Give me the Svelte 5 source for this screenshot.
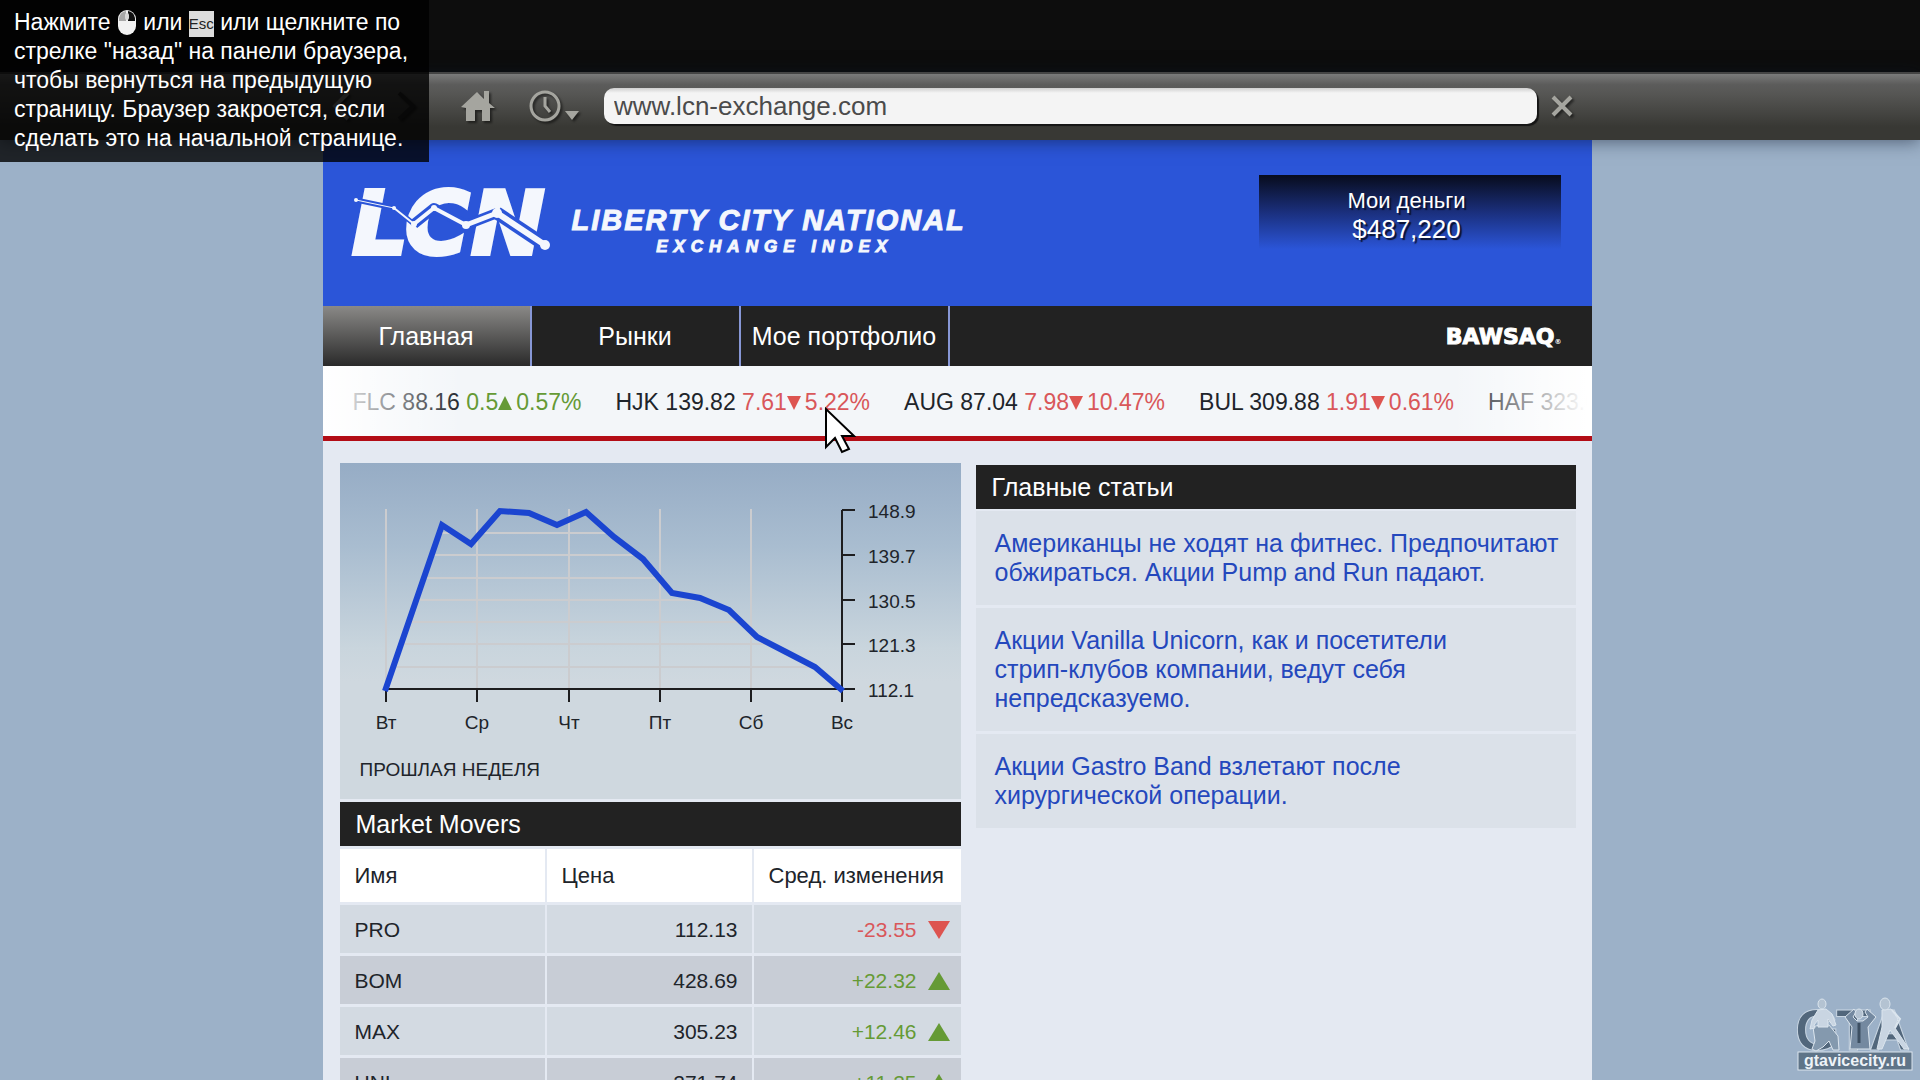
<script>
  const TABS = ["Главная", "Рынки", "Мое портфолио"];

  const TICKER = [
    { name: "FLC", price: "88.16", change: "0.5", percent: "0.57%", up: true },
    { name: "HJK", price: "139.82", change: "7.61", percent: "5.22%", up: false },
    { name: "AUG", price: "87.04", change: "7.98", percent: "10.47%", up: false },
    { name: "BUL", price: "309.88", change: "1.91", percent: "0.61%", up: false },
    { name: "HAF", price: "323.07", change: "", percent: "", up: true },
  ];

  const MOVERS = [
    { name: "PRO", price: "112.13", change: "-23.55", up: false },
    { name: "BOM", price: "428.69", change: "+22.32", up: true },
    { name: "MAX", price: "305.23", change: "+12.46", up: true },
    { name: "UNI", price: "271.74", change: "+11.25", up: true },
  ];

  const ARTICLES = [
    "Американцы не ходят на фитнес. Предпочитают\nобжираться. Акции Pump and Run падают.",
    "Акции Vanilla Unicorn, как и посетители\nстрип-клубов компании, ведут себя\nнепредсказуемо.",
    "Акции Gastro Band взлетают после\nхирургической операции.",
  ];

  // Chart geometry, in viewBox units
  const DAYS = [
    { label: "Вт", x: 46 },
    { label: "Ср", x: 137 },
    { label: "Чт", x: 229 },
    { label: "Пт", x: 320 },
    { label: "Сб", x: 411 },
    { label: "Вс", x: 502 },
  ];
  const LEVELS = [
    { label: "148.9", y: 47 },
    { label: "139.7", y: 92 },
    { label: "130.5", y: 137 },
    { label: "121.3", y: 181 },
    { label: "112.1", y: 226 },
  ];
  const GRID_ROWS = [70, 92, 115, 137, 159, 181, 204];
  const LINE =
    "45,228 102,62 131,81 160,48 189,50 217,62 246,49 274,74 303,96 332,130 360,135 389,147 417,174 446,189 475,204 503,228";

  let activeTab = $state(TABS[0]);
  let address = $state("www.lcn-exchange.com");
</script>

{#snippet arrow(up, size)}
  <svg
    class="arrow"
    width={size}
    height={size}
    viewBox="0 0 20 20"
    preserveAspectRatio="none"
    aria-hidden="true"
  >
    <path d={up ? "M10 0L20 20H0Z" : "M0 0H20L10 20Z"} />
  </svg>
{/snippet}

<div class="screen">
  <div class="letterbox"></div>

  <!-- Browser bar -->
  <header class="toolbar">
    <div class="toolbar-inner">
      <button class="tool back" aria-label="Назад">
        <svg width="24" height="32" viewBox="0 0 24 32">
          <path d="M19 3L6 16l13 13" fill="none" stroke="#9a9a94" stroke-width="4" />
        </svg>
      </button>
      <button class="tool forward" aria-label="Вперед">
        <svg width="24" height="32" viewBox="0 0 24 32">
          <path d="M4 3l14 13L4 29" fill="none" stroke="#2c2c29" stroke-width="4" />
        </svg>
      </button>
      <button class="tool home" aria-label="Домой">
        <svg width="36" height="32" viewBox="0 0 36 32">
          <path d="M1 17L17 2l7 7V1h5v12l6 5h-5v13h-8V20h-7v11H6V18Z" fill="#a5a59f" />
        </svg>
      </button>
      <button class="tool history" aria-label="Журнал">
        <svg width="52" height="34" viewBox="0 0 52 34">
          <circle cx="17" cy="17" r="14" fill="none" stroke="#a5a59f" stroke-width="3" />
          <path d="M17 8v9l5 6" fill="none" stroke="#a5a59f" stroke-width="3" />
          <path d="M37 22h14l-7 9Z" fill="#a5a59f" />
        </svg>
      </button>
      <input class="address" type="text" aria-label="Адрес" bind:value={address} />
      <button class="tool close" aria-label="Закрыть">
        <svg width="22" height="22" viewBox="0 0 22 22">
          <path d="M2 2l18 18M20 2L2 20" stroke="#a5a59f" stroke-width="4" />
        </svg>
      </button>
    </div>
  </header>

  <main class="page">
    <div class="banner">
      <div class="brand">
        <svg class="logo" width="200" height="80" viewBox="0 0 200 80" role="img" aria-label="LCN">
          <g class="logo-letters">
            <text x="-1" y="70">L</text>
            <text x="52" y="70">C</text>
            <text x="118" y="70">N</text>
          </g>
          <g fill="none" stroke="#2b55d8" stroke-linejoin="round">
            <path d="M3 16L41 24L61 40" stroke-width="5" />
            <path d="M61 40L81 24L113 41L144 29" stroke-width="10" />
            <path d="M144 29L192 61" stroke-width="13" />
          </g>
          <g fill="none" stroke="#f4f7fd" stroke-linejoin="round" stroke-linecap="round">
            <path d="M3 16L41 24" stroke-width="1" />
            <path d="M41 24L61 40" stroke-width="2" />
            <path d="M61 40L81 24L113 41" stroke-width="4" />
            <path d="M113 41L144 29" stroke-width="5" />
            <path d="M144 29L192 61" stroke-width="6" />
          </g>
          <g fill="#f4f7fd">
            <circle cx="3" cy="16" r="2" />
            <circle cx="41" cy="24" r="2" />
            <circle cx="61" cy="40" r="3" />
            <circle cx="81" cy="24" r="3" />
            <circle cx="113" cy="41" r="4" />
            <circle cx="144" cy="29" r="5" />
            <circle cx="192" cy="61" r="5" />
          </g>
        </svg>
        <div class="brand-text">
          <div class="brand-name">LIBERTY CITY NATIONAL</div>
          <div class="brand-sub">EXCHANGE INDEX</div>
        </div>
      </div>
      <div class="money">
        <div class="money-label">Мои деньги</div>
        <div class="money-value">$487,220</div>
      </div>
    </div>

    <nav class="tabs">
      {#each TABS as tab}
        <button class="tab" class:active={tab === activeTab} onclick={() => (activeTab = tab)}>
          {tab}
        </button>
      {/each}
      <a class="bawsaq" href="#bawsaq">BAWSAQ<span class="reg">®</span></a>
    </nav>

    <div class="ticker">
      {#each TICKER as item}
        <div class="quote">
          <span>{item.name} {item.price}</span>
          {#if item.change}
            <span class="change" class:up={item.up}>
              {item.change}{@render arrow(item.up, 14)}{item.percent}
            </span>
          {/if}
        </div>
      {/each}
    </div>

    <div class="content">
      <div class="market">
        <section class="chart">
          <svg class="plot" viewBox="0 0 621 280">
            <clipPath id="under-line">
              <polygon points={LINE} />
            </clipPath>
            <g clip-path="url(#under-line)">
              {#each GRID_ROWS as y}
                <line class="grid" x1="46" x2="502" y1={y} y2={y} />
              {/each}
            </g>
            {#each DAYS.slice(0, 5) as day}
              <line class="grid" x1={day.x} x2={day.x} y1="46" y2="226" />
            {/each}
            <path class="axis" d="M46 226H502V47" />
            {#each DAYS as day}
              <line class="axis" x1={day.x} x2={day.x} y1="226" y2="239" />
              <text x={day.x} y="266" text-anchor="middle">{day.label}</text>
            {/each}
            {#each LEVELS as level}
              <line class="axis" x1="502" x2="515" y1={level.y} y2={level.y} />
              <text x="528" y={level.y + 8}>{level.label}</text>
            {/each}
            <polyline class="trend" points={LINE} />
          </svg>
          <div class="period">ПРОШЛАЯ НЕДЕЛЯ</div>
        </section>

        <section>
          <h2>Market Movers</h2>
          <table>
            <thead>
              <tr>
                <th>Имя</th>
                <th>Цена</th>
                <th>Сред. изменения</th>
              </tr>
            </thead>
            <tbody>
              {#each MOVERS as row}
                <tr>
                  <td>{row.name}</td>
                  <td class="price">{row.price}</td>
                  <td>
                    <div class="change delta" class:up={row.up}>
                      {row.change}
                      {@render arrow(row.up, 22)}
                    </div>
                  </td>
                </tr>
              {/each}
            </tbody>
          </table>
        </section>
      </div>

      <section class="news">
        <h2>Главные статьи</h2>
        {#each ARTICLES as article}
          <article><a href="#article">{article}</a></article>
        {/each}
      </section>
    </div>
  </main>

  <!-- Help box over the browser -->
  <aside class="hint">
    Нажмите
    <svg class="mouse" width="20" height="27" viewBox="0 0 20 27" aria-hidden="true">
      <rect x="1" y="1" width="18" height="25" rx="9" fill="#f2f2f2" />
      <path d="M9 2v10H2V9q1-6 7-7Z" fill="#a8a8a8" />
      <path d="M11 2v10h7V9q-1-6-7-7Z" fill="#111" />
      <rect x="8" y="4" width="4" height="7" rx="2" fill="#d8d8d8" />
    </svg>
    или <kbd>Esc</kbd> или щелкните по<br />
    стрелке "назад" на панели браузера,<br />
    чтобы вернуться на предыдущую<br />
    страницу. Браузер закроется, если<br />
    сделать это на начальной странице.
  </aside>

  <svg class="cursor" width="32" height="48" viewBox="0 0 32 48" aria-hidden="true">
    <path
      d="M2 3V41L11 32L18 46L25 43L18 30H30Z"
      fill="#fff"
      stroke="#000"
      stroke-width="2"
    />
  </svg>

  <svg class="watermark" width="116" height="78" viewBox="0 0 116 78" role="img" aria-label="gtavicecity.ru">
    <g class="watermark-big">
      <text x="-2" y="54">G</text>
      <text x="39" y="54">T</text>
      <text x="72" y="54">A</text>
    </g>
    <!-- Seated figure -->
    <g stroke="#dbe5ee" stroke-width="1">
      <path d="M16 31l6-2h10l9 11 1 14h-6l-4-9-6 6-7 4-4-2 3-8Z" fill="#8499ae" />
      <path d="M21 14l8-1 6 5 4 11-3 1-5-7v8H21v-7l-4 5 1 3-5 1 2-9Z" fill="#c9d5e2" />
      <ellipse cx="25" cy="8" rx="4" ry="5" fill="#b4c3d2" />
    </g>
    <!-- Figure with raised arms -->
    <g stroke="#dbe5ee" stroke-width="1">
      <path d="M57 13L48 21l7 10-2 22h20l-2-22 8-10-9-8-2 3 3 5-5 4h-6l-4-4 3-5Z" fill="#7489a0" />
      <ellipse cx="62" cy="18" rx="4" ry="5" fill="#b4c3d2" />
      <path d="M62 27v20" stroke="#3d4f62" stroke-width="3" />
    </g>
    <!-- Leaning figure -->
    <g stroke="#dbe5ee" stroke-width="1">
      <path d="M85 14l9-1 7 10-3 9 14 21h-5L93 34l-8 19h-5l5-22Z" fill="#c9d5e2" />
      <path d="M95 14l8 9-5 9" fill="none" stroke-width="2" />
      <ellipse cx="88" cy="8" rx="5" ry="6" fill="#b4c3d2" />
    </g>
    <rect x="1" y="56" width="114" height="18" fill="#5f7488" stroke="#dbe5ee" />
    <text class="watermark-url" x="58" y="70" text-anchor="middle">gtavicecity.ru</text>
  </svg>
</div>

<style>
  :global(body) {
    margin: 0;
    background: #9cb1c8;
  }

  .screen {
    position: relative;
    height: 100vh;
    overflow: hidden;
    background: #9cb1c8;
    color: #20242a;
    font-family: "Liberation Sans", Arial, sans-serif;
  }

  button {
    font: inherit;
    border: 0;
    cursor: pointer;
  }

  .letterbox {
    height: 72px;
    background: #0d0d0d;
  }

  .toolbar {
    position: relative;
    z-index: 1;
    height: 68px;
    box-sizing: border-box;
    padding-right: 5px;
    border-top: 2px solid #444;
    background: linear-gradient(#7a7a7a, #5c5c5b 16%, #565654 30%, #383834 80%, #383834);
    box-shadow: 0 2px 16px rgba(10, 20, 40, 0.5);
  }

  .toolbar-inner {
    display: flex;
    align-items: center;
    max-width: 1269px;
    height: 64px;
    margin: 0 auto;
  }

  .tool {
    display: flex;
    padding: 0;
    background: none;
    filter: drop-shadow(2px 2px 1px rgba(0, 0, 0, 0.5));
  }

  .back {
    margin-left: 6px;
  }

  .forward {
    margin-left: 42px;
  }

  .home {
    margin-left: 41px;
  }

  .history {
    margin-left: 32px;
  }

  .address {
    flex: 1;
    min-width: 0;
    height: 36px;
    box-sizing: border-box;
    margin: 0 14px 0 24px;
    padding: 0 10px;
    border: 0;
    border-radius: 10px;
    background: linear-gradient(#cfcfcf, #f4f4f4 5px);
    box-shadow: 2px 2px 1px #151515;
    color: #4b4b4b;
    font: 26px "Liberation Sans", Arial, sans-serif;
  }

  .close {
    margin-right: 19px;
  }

  .screen > .page {
    box-sizing: border-box;
    max-width: 1269px;
    margin: 0 auto;
    position: relative;
    right: 3px;
    background: #e4e9f2;
  }

  .banner {
    display: flex;
    justify-content: space-between;
    height: 166px;
    box-sizing: border-box;
    padding: 35px 31px 0 30px;
    background: #2b55d8;
    color: #f4f7fd;
  }

  .brand {
    display: flex;
    gap: 19px;
  }

  .logo {
    margin-top: 9px;
    overflow: visible;
  }

  .logo-letters {
    fill: #f4f7fd;
    stroke: #f4f7fd;
    stroke-width: 4px;
    font: italic bold 88px "DejaVu Sans", sans-serif;
  }

  .brand-text {
    padding-top: 28px;
    text-align: center;
    font-style: italic;
    font-weight: bold;
  }

  .brand-name {
    font-size: 29px;
    line-height: 34px;
    letter-spacing: 2px;
    -webkit-text-stroke: 1px #f4f7fd;
  }

  .brand-sub {
    padding-left: 12px;
    font-size: 17px;
    line-height: 20px;
    letter-spacing: 6px;
    -webkit-text-stroke: 1px #f4f7fd;
  }

  .money {
    width: 302px;
    height: 74px;
    box-sizing: border-box;
    padding: 11px 6px 0 0;
    background: linear-gradient(#080c1c, #1a2f7c 50%, #2b55d8);
    color: #fff;
    text-align: center;
    text-shadow: 2px 2px 1px #0a1230;
  }

  .money-label {
    font-size: 22px;
    line-height: 29px;
  }

  .money-value {
    font-size: 26px;
    line-height: 29px;
  }

  .tabs {
    display: flex;
    align-items: center;
    height: 60px;
    background: #222;
  }

  .tab {
    width: 209px;
    height: 100%;
    padding: 0;
    border-right: 2px solid #8797d6;
    background: #222;
    color: #fff;
    font-size: 25px;
    white-space: nowrap;
  }

  .tab.active {
    background: linear-gradient(#8a8987, #2a2a2a);
  }

  .bawsaq {
    margin-left: auto;
    padding-right: 30px;
    color: #fff;
    font: bold 22px "DejaVu Sans", sans-serif;
    text-decoration: none;
    -webkit-text-stroke: 1px #fff;
  }

  .reg {
    font-size: 7px;
    -webkit-text-stroke: 0;
  }

  .ticker {
    position: relative;
    display: flex;
    align-items: center;
    gap: 34px;
    height: 70px;
    padding: 2px 0 0 30px;
    box-sizing: border-box;
    height: 75px;
    border-bottom: 5px solid #b30d16;
    overflow: hidden;
    background: #f3f6f9;
    font-size: 23px;
    white-space: nowrap;
  }

  .ticker::after {
    content: "";
    position: absolute;
    inset: 0;
    background: linear-gradient(
      90deg,
      #fff,
      rgba(255, 255, 255, 0) 140px,
      rgba(255, 255, 255, 0) calc(100% - 140px),
      #fff calc(100% - 5px)
    );
  }

  .change {
    color: #d9575a;
    fill: #dd5450;
  }

  .change.up {
    color: #659a35;
    fill: #659a35;
  }

  .quote .arrow {
    margin-right: 4px;
  }

  .content {
    display: grid;
    grid-template-columns: 1.035fr 1fr;
    align-items: start;
    gap: 15px;
    padding: 22px 16px 22px 17px;
  }

  .market {
    display: grid;
    gap: 3px;
  }

  .chart {
    padding-bottom: 10px;
    background: linear-gradient(#96acc5, #a9bdd0 25%, #c9d5dd 55%, #cfd8df 65%, #cfd8df);
  }

  .plot {
    display: block;
    width: 100%;
    font-size: 19px;
    fill: #20242a;
  }

  .grid {
    stroke: #cbcccf;
    stroke-width: 2;
  }

  .axis {
    fill: none;
    stroke: #1d1d1f;
    stroke-width: 2;
  }

  .trend {
    fill: none;
    stroke: #1b45d0;
    stroke-width: 6;
  }

  .period {
    padding: 8px 20px 0;
    font-size: 19px;
    line-height: 38px;
  }

  h2 {
    margin: 0 0 3px;
    padding: 0 16px;
    background: #222;
    color: #fff;
    font-size: 25px;
    font-weight: normal;
    line-height: 44px;
  }

  table {
    width: 100%;
    border-spacing: 0;
    table-layout: fixed;
  }

  th,
  td {
    height: 46px;
    padding: 2px 14px 0 15px;
    border-right: 2px solid #e4e9f2;
    border-bottom: 3px solid #e4e9f2;
    background-color: #d3dae2;
    background-clip: padding-box;
    font-size: 21px;
    font-weight: normal;
    text-align: left;
    white-space: nowrap;
  }

  th {
    height: 53px;
    padding-top: 0;
    background-color: #fff;
    font-size: 22px;
  }

  th:last-child,
  td:last-child {
    border-right: 0;
    padding-right: 11px;
  }

  tbody tr:nth-child(even) td {
    background-color: #c8cdd6;
  }

  td.price {
    text-align: right;
  }

  .delta {
    display: flex;
    align-items: center;
    justify-content: flex-end;
    gap: 11px;
  }

  .delta .arrow {
    height: 18px;
  }

  .news {
    margin-top: 2px;
  }

  .news h2 {
    margin-bottom: 2px;
  }

  article {
    margin-bottom: 3px;
    padding: 18px 10px 18px 19px;
    background: #dbe1e9;
    font-size: 25px;
    line-height: 29px;
    white-space: pre-line;
  }

  article a {
    color: #2448bd;
    text-decoration: none;
  }

  .hint {
    position: absolute;
    z-index: 2;
    top: 0;
    left: 0;
    padding: 8px 21px 9px 14px;
    background: rgba(0, 0, 0, 0.8);
    color: #fff;
    font-size: 23px;
    line-height: 29px;
    white-space: nowrap;
  }

  .mouse {
    vertical-align: -6px;
  }

  kbd {
    display: inline-block;
    background: #dcdcdc;
    color: #222;
    font: 15px "Liberation Sans", Arial, sans-serif;
    line-height: 26px;
    vertical-align: 1px;
  }

  .cursor {
    position: absolute;
    top: 406px;
    left: 824px;
  }

  .watermark {
    position: absolute;
    right: 7px;
    bottom: 6px;
  }

  .watermark-big {
    fill: #52677c;
    stroke: #c9d6e3;
    stroke-width: 1px;
    font: bold 57px "Liberation Sans", Arial, sans-serif;
  }

  .watermark-url {
    fill: #eef3f8;
    font: bold 16px "Liberation Sans", Arial, sans-serif;
  }
</style>
